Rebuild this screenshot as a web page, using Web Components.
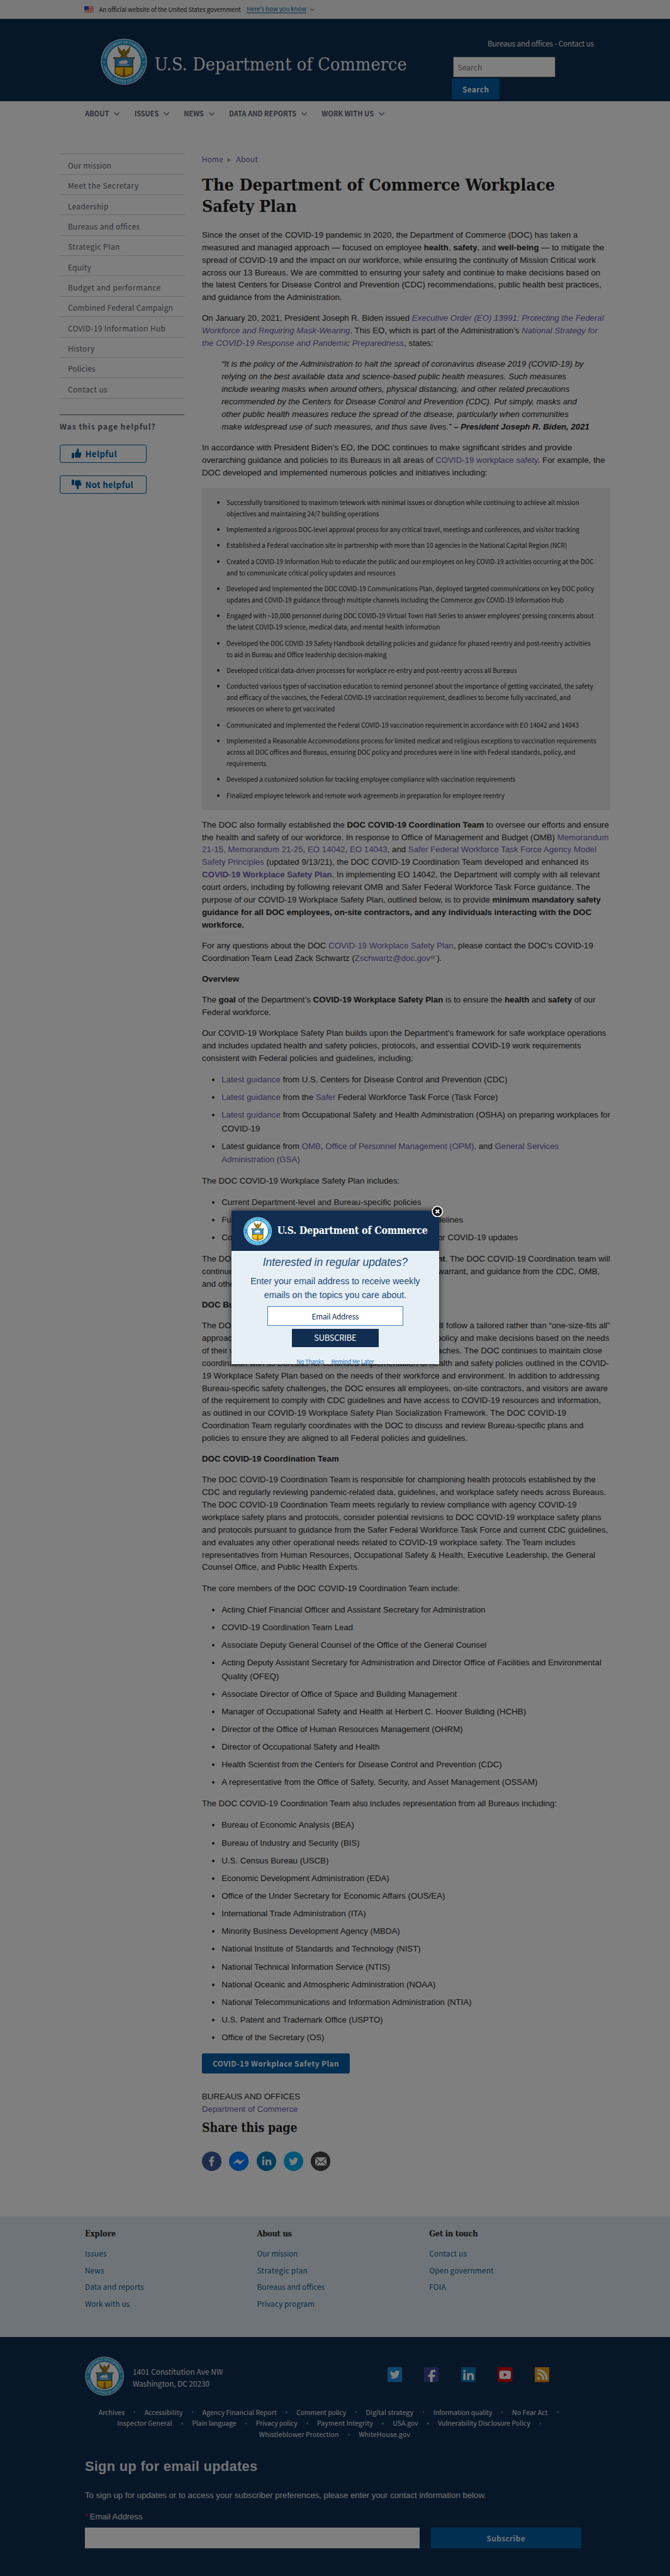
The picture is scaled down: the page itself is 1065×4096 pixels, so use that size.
<!DOCTYPE html>
<html lang="en">
<head>
<meta charset="utf-8">
<title>The Department of Commerce Workplace Safety Plan</title>
<style>
html{background:#09172a}
body{margin:0;overflow:hidden;background:#09172a;font:17px/25.5px "Liberation Sans",Arial,sans-serif;color:#212121;
--sans:"Noto Sans CJK SC","Noto Sans",sans-serif;--serif:"DejaVu Serif Condensed","DejaVu Serif",serif;--blue:#005ea2;--navy:#112e51;--visited:#6c59ab}
</style>
</head>
<body>
<commerce-page></commerce-page>
<script>
const K = 1366 / 1350;
const define = (name, html, after) => customElements.define(name, class extends HTMLElement {
  connectedCallback() {
    if (this.shadowRoot) return;
    this.attachShadow({mode: 'open'}).innerHTML = html;
    if (after) after(this, this.shadowRoot);
  }
});
const ctx = document.createElement('canvas').getContext('2d');
const measure = (el, text) => {
  const c = getComputedStyle(el);
  ctx.font = `${c.fontStyle} ${c.fontWeight} 100px ${c.fontFamily}`;
  return ctx.measureText(text).width / 100 * parseFloat(c.fontSize);
};

/* A label tracked so that it takes the width given in "w". */
define('fit-text', `<style>:host{display:inline-block;white-space:nowrap}</style><slot></slot>`, el => {
  const w = parseFloat(el.getAttribute('w')) * K, t = el.textContent;
  el.style.letterSpacing = ((w - measure(el, t)) / t.length).toFixed(3) + 'px';
});

define('doc-seal', `<style>:host{display:block;flex:none}svg{display:block;width:100%;height:100%}text{font:bold 7.4px "Liberation Sans",sans-serif;fill:#d9f1fb}</style>
<svg viewBox="-47 -47 94 94"><defs><path id="a" d="M-36.8 0A36.8 36.8 0 0 1 36.8 0"/><path id="b" d="M-42.2 0A42.2 42.2 0 0 0 42.2 0"/></defs>
<circle r="46.5" fill="#d4eaf6"/><circle r="44.8" fill="#259bd3"/><circle r="35.4" fill="#127cb2"/><circle r="34" fill="#fff"/>
<text text-anchor="middle" textLength="102"><textPath href="#a" startOffset="50%" textLength="102">DEPARTMENT OF COMMERCE</textPath></text>
<text text-anchor="middle" textLength="114"><textPath href="#b" startOffset="50%" textLength="114">UNITED STATES OF AMERICA</textPath></text>
<circle cx="-40" cy="1" r="1.2" fill="#fff"/><circle cx="40" cy="1" r="1.2" fill="#fff"/>
<path d="M-12-30C-12-22-9-15-4-13L-7-10H7L4-13C9-15 12-22 12-30C9-26 6-22 3-20L1-25-2-24-3-20C-6-22-9-26-12-30Z" fill="#a98a1f" stroke="#4b3a12" stroke-width=".9"/>
<path d="M-3-19L-1-11M3-19L1-11M-9-24L-4-15M9-24L4-15" stroke="#5a4514" stroke-width=".8"/>
<path d="M-21-8H21L18-4V24Q12 29 0 31.5Q-12 29-18 24V-4Z" fill="#ffc20e"/>
<path d="M-20-7H20L17.5-4V10H-17.5V-4Z" fill="#2b93cf"/>
<path d="M-9-1L-3-4-1-2 4-5 7-1H10L6 5H-8L-12 1Z" fill="#eef6fb" stroke="#23455c" stroke-width=".8"/><path d="M-12 6H12M-9 8H10" stroke="#d6ecf7" stroke-width="1"/>
<path d="M-17.5 10.5H17.5" stroke="#222" stroke-width="1.4"/>
<path d="M-1.5 13H1.5L2.5 25 4 29H-4L-2.5 25Z" fill="#8d6a12"/><path d="M-17 23Q-8 26-3 28M17 23Q8 26 3 28" stroke="#9d7c14" fill="none"/>
<path d="M-21-8H21L17.8-4V24Q12 29 0 31Q-12 29-17.8 24V-4Z" fill="none" stroke="#1c1c1c" stroke-width="1.3"/></svg>`);

define('down-chevron', `<style>:host{display:inline-block;width:12px;height:8px;flex:none}svg{display:block;width:100%;height:100%}</style><svg viewBox="0 0 12 8"><path d="M1 1L6 6.6 11 1" fill="none" stroke="currentColor" stroke-width="1.6"/></svg>`);

define('gov-banner', `<style>:host{display:flex;align-items:center;height:38.5px;background:#f1f1f1;padding-left:172px;font:12.3px/1 var(--sans);color:#212121}
svg{width:19.5px;height:13px;margin-right:10.5px}a{color:var(--blue);margin:0 8px 0 12px;border-bottom:1px solid;line-height:14px}down-chevron{width:8.5px;height:6px}.t{line-height:14px}</style>
<svg viewBox="0 0 20 13"><path fill="#fff" d="M0 0h20v13H0z"/><path stroke="#e0402c" d="M0 .5h20M0 2.5h20M0 4.5h20M0 6.5h20M0 8.5h20M0 10.5h20M0 12.5h20"/><path fill="#1e33b1" d="M0 0h9v7H0z"/><path stroke="#7686dd" stroke-dasharray="1 1" d="M1 1.5h7M1 3.5h7M1 5.5h7"/></svg>
<span class="t"><fit-text w="286">An official website of the United States government</fit-text></span><a><fit-text w="120">Here's how you know</fit-text></a><down-chevron></down-chevron>`);

define('site-header', `<style>:host{display:flex;height:168px;background:var(--navy);color:#fff;padding-left:205px;box-sizing:border-box}
doc-seal{width:95px;height:95px;margin-top:40px}
h2{margin:76px 0 0 15px;font:36.5px/1 var(--serif);height:44px;width:606px;color:#eef1f5}
.r{width:290px;font-family:var(--sans);display:flex;flex-direction:column}
.top{height:24px;margin-top:39px;text-align:right;font-size:15.2px;line-height:24px;color:#e8ebef}
.in{box-sizing:border-box;width:209.5px;height:42.5px;margin:14px 0 0 2px;background:#fff;border:1px solid #5b616b;padding-left:9px;font-size:15.2px;line-height:42px;color:#757575}
.b{width:98px;height:42.5px;margin-top:2px;background:var(--blue);border-radius:3px;text-align:center;font-weight:700;font-size:15.2px;line-height:42.5px}</style>
<doc-seal></doc-seal><h2><fit-text w="509">U.S. Department of Commerce</fit-text></h2>
<div class="r"><div class="top"><fit-text w="214">Bureaus and offices - Contact us</fit-text></div><div class="in"><fit-text w="49">Search</fit-text></div><div class="b"><fit-text w="54">Search</fit-text></div></div>`);

define('site-nav', `<style>:host{display:flex;height:107px;padding-left:173px;font:700 14.1px/50px var(--sans);color:#5b616b;box-sizing:border-box}
div{display:flex;align-items:center;height:50px;margin-right:29.5px}down-chevron{margin:2px 0 0 10px}</style>
<div><fit-text w="49">ABOUT</fit-text><down-chevron></down-chevron></div><div><fit-text w="49">ISSUES</fit-text><down-chevron></down-chevron></div><div><fit-text w="40">NEWS</fit-text><down-chevron></down-chevron></div><div><fit-text w="136">DATA AND REPORTS</fit-text><down-chevron></down-chevron></div><div><fit-text w="105">WORK WITH US</fit-text><down-chevron></down-chevron></div>`);

define('side-item', `<style>:host{display:block;height:41.5px;box-sizing:border-box;border-top:1.3px solid #d6d7d9;padding:2px 0 0 17px;font:15.2px/41px var(--sans);color:#5b616b}</style><slot></slot>`);
define('help-button', `<style>:host{display:flex;align-items:center;box-sizing:border-box;width:178px;height:37px;border:2px solid var(--blue);border-radius:4px;padding-left:24px;color:var(--blue);font:700 17px/33px var(--sans);margin-bottom:26px}
svg{width:20px;height:21px;margin-right:7px}:host([down]) svg{transform:rotate(180deg) scaleX(-1)}</style>
<svg viewBox="0 0 20 21" fill="currentColor"><path d="M0 9h5v11H0zM6.5 9.5C9 8 11 5 11 1c0-1.300 4-1 3.500 2.500L13.500 8H19c1.500 1 .8 2 0 3 .8 1 .5 2-.5 3 .5 1 0 2-.8 2.600.3 1.400-.5 2.400-1.700 2.400h-5c-2 0-3-1-4.500-1z"/></svg><slot></slot>`);
define('side-nav', `<style>:host{display:block;width:255px;margin-left:121.500px;flex:none}.rule{border-top:1.300px solid #d6d7d9;height:33px}.q{width:254px;border-top:1.500px solid #5b616b;font:700 15.600px/24px var(--sans);padding-top:11px;margin-bottom:25px;color:#5b616b}</style>
<side-item><fit-text w="88">Our mission</fit-text></side-item><side-item><fit-text w="143">Meet the Secretary</fit-text></side-item><side-item><fit-text w="82">Leadership</fit-text></side-item><side-item><fit-text w="145">Bureaus and offices</fit-text></side-item><side-item><fit-text w="105">Strategic Plan</fit-text></side-item><side-item><fit-text w="47">Equity</fit-text></side-item><side-item><fit-text w="187">Budget and performance</fit-text></side-item><side-item><fit-text w="212">Combined Federal Campaign</fit-text></side-item><side-item><fit-text w="197">COVID-19 Information Hub</fit-text></side-item><side-item><fit-text w="54">History</fit-text></side-item><side-item><fit-text w="56">Policies</fit-text></side-item><side-item><fit-text w="80">Contact us</fit-text></side-item>
<div class="rule"></div><div class="q"><fit-text w="194">Was this page helpful?</fit-text></div>
<help-button><fit-text w="64">Helpful</fit-text></help-button><help-button down><fit-text w="97">Not helpful</fit-text></help-button>`);

/* Shaded list of initiatives; one row per rendered line, text size taken from the width of the first. */
define('initiative-list', `<style>:host{display:block;background:#ececec;margin:18.500px 0 18px;padding:18px 0;width:832px;font:13px/23.250px var(--sans);color:#212121}
ul{margin:0;padding:0 0 0 50px;list-style:disc}li{margin-bottom:9.080px;white-space:nowrap}li:last-child{margin:0}</style>
<ul><li>Successfully transitioned to maximum telework with minimal issues or disruption while continuing to achieve all mission<br>objectives and maintaining 24/7 building operations</li>
<li>Implemented a rigorous DOC-level approval process for any critical travel, meetings and conferences, and visitor tracking</li>
<li>Established a Federal vaccination site in partnership with more than 10 agencies in the National Capital Region (NCR)</li>
<li>Created a COVID-19 Information Hub to educate the public and our employees on key COVID-19 activities occurring at the DOC<br>and to communicate critical policy updates and resources</li>
<li>Developed and implemented the DOC COVID-19 Communications Plan, deployed targeted communications on key DOC policy<br>updates and COVID-19 guidance through multiple channels including the Commerce.gov COVID-19 Information Hub</li>
<li>Engaged with ~10,000 personnel during DOC COVID-19 Virtual Town Hall Series to answer employees<span style="font-family:'Noto Sans'">’</span> pressing concerns about<br>the latest COVID-19 science, medical data, and mental health information</li>
<li>Developed the DOC COVID-19 Safety Handbook detailing policies and guidance for phased reentry and post-reentry activities<br>to aid in Bureau and Office leadership decision-making</li>
<li>Developed critical data-driven processes for workplace re-entry and post-reentry across all Bureaus</li>
<li>Conducted various types of vaccination education to remind personnel about the importance of getting vaccinated, the safety<br>and efficacy of the vaccines, the Federal COVID-19 vaccination requirement, deadlines to become fully vaccinated, and<br>resources on where to get vaccinated</li>
<li>Communicated and implemented the Federal COVID-19 vaccination requirement in accordance with EO 14042 and 14043</li>
<li>Implemented a Reasonable Accommodations process for limited medical and religious exceptions to vaccination requirements<br>across all DOC offices and Bureaus, ensuring DOC policy and procedures were in line with Federal standards, policy, and<br>requirements</li>
<li>Developed a customized solution for tracking employee compliance with vaccination requirements</li>
<li>Finalized employee telework and remote work agreements in preparation for employee reentry</li></ul>`, (el, root) => {
  const t = root.querySelector('li').firstChild.textContent;
  el.style.fontSize = (parseFloat(getComputedStyle(el).fontSize) * 720.4 / measure(el, t)).toFixed(2) + 'px';
});

define('share-row', `<style>:host{display:flex;gap:15.600px;height:40px}svg{width:40px;height:40px}</style>
<svg viewBox="0 0 40 40"><circle cx="20" cy="20" r="20" fill="#3b5998"/><path fill="#fff" d="M17.500 30V21H14.500V17H17.500V14.500C17.500 11.500 19.300 10 22 10H24.700V13.700H22.800C21.700 13.700 21.500 14.300 21.500 15.200V17H24.700L24.300 21H21.500V30Z"/></svg>
<svg viewBox="0 0 40 40"><circle cx="20" cy="20" r="20" fill="#007fff"/><path fill="#fff" d="M7 26L17.500 15.500 23 20 33 15.500 22.500 26.500 17 21.800Z"/></svg>
<svg viewBox="0 0 40 40"><circle cx="20" cy="20" r="20" fill="#007bb5"/><path fill="#fff" d="M11.500 16.500H15.500V28H11.500ZM18 16.500H21.700V18C24 15.200 30 15.500 30 21V28H26V22C26 18.500 22 18.800 22 22V28H18Z"/><circle cx="13.500" cy="12.700" r="2.300" fill="#fff"/></svg>
<svg viewBox="0 0 40 40"><circle cx="20" cy="20" r="20" fill="#00aced"/><path transform="translate(10.500 10.500) scale(.8)" fill="#fff" d="M23.950 4.570a10 10 0 0 1-2.820.77 4.960 4.960 0 0 0 2.160-2.720 9.900 9.900 0 0 1-3.120 1.180 4.920 4.920 0 0 0-8.380 4.480A13.900 13.900 0 0 1 1.640 3.160a4.920 4.920 0 0 0 1.520 6.570 4.900 4.900 0 0 1-2.230-.61v.06a4.920 4.920 0 0 0 3.950 4.830 5 5 0 0 1-2.210.08 4.940 4.940 0 0 0 4.600 3.420A9.870 9.870 0 0 1 0 19.540a14 14 0 0 0 7.550 2.210c9.050 0 14-7.500 14-13.980l-.02-.64a9.900 9.900 0 0 0 2.420-2.560z"/></svg>
<svg viewBox="0 0 40 40"><circle cx="20" cy="20" r="20" fill="#444"/><rect x="9" y="12" width="23" height="16.500" rx="1.500" fill="#fff"/><path d="M9 13L20.500 23 32 13M9.500 28L17 20M31.500 28L24 20" fill="none" stroke="#333" stroke-width="1.500"/></svg>`);

define('plan-article', `<style>:host{display:block;width:834px;margin-left:35.300px}
p{margin:0 0 17px;white-space:nowrap}a{color:var(--visited)}blockquote{margin:0 0 0 40px;font-style:italic}
ul{margin:0 0 17px;padding-left:40px}li{line-height:27.600px;margin-bottom:8.500px;white-space:nowrap}li:last-child{margin-bottom:0}
.crumb{font:15.200px/24px var(--sans);display:flex}.crumb i{font-style:normal;margin:0 12px 0 7px}
h1{font:700 34.500px/44px var(--serif);margin:18px 0 23.400px;height:88px;white-space:nowrap}
.ln{display:flex;justify-content:space-between}
.btn{width:301.500px;height:41px;margin-top:19px;background:var(--blue);border-radius:3px;color:#fff;text-align:center;font:700 15.200px/41px var(--sans)}
.meta{margin-top:34px;margin-bottom:10px}h3{font:700 25px/34px var(--serif);margin:0 0 30px}
svg.m{width:8px;height:6px;margin:0 4px 4px 1px}</style>
<div class="crumb"><a><fit-text w="43">Home</fit-text></a><i>»</i><a><fit-text w="44">About</fit-text></a></div>
<h1><fit-text w="712">The Department of Commerce Workplace</fit-text><br><fit-text w="191">Safety Plan</fit-text></h1>
<p>Since the onset of the COVID-19 pandemic in 2020, the Department of Commerce (DOC) has taken a<br>measured and managed approach — focused on employee <b>health</b>, <b>safety</b>, and <b>well-being</b> — to mitigate the<br>spread of COVID-19 and the impact on our workforce, while ensuring the continuity of Mission Critical work<br>across our 13 Bureaus. We are committed to ensuring your safety and continue to make decisions based on<br>the latest Centers for Disease Control and Prevention (CDC) recommendations, public health best practices,<br>and guidance from the Administration.</p>
<p>On January 20, 2021, President Joseph R. Biden issued <a><em>Executive Order (EO) 13991: Protecting the Federal<br>Workforce and Requiring Mask-Wearing</em></a>. This EO, which is part of the Administration’s <a><em>National Strategy for<br>the COVID-19 Response and Pandemic Preparedness</em></a>, states:</p>
<blockquote><p>“It is the policy of the Administration to halt the spread of coronavirus disease 2019 (COVID-19) by<br>relying on the best available data and science-based public health measures. Such measures<br>include wearing masks when around others, physical distancing, and other related precautions<br>recommended by the Centers for Disease Control and Prevention (CDC). Put simply, masks and<br>other public health measures reduce the spread of the disease, particularly when communities<br>make widespread use of such measures, and thus save lives.” <b>– President Joseph R. Biden, 2021</b></p></blockquote>
<p>In accordance with President Biden’s EO, the DOC continues to make significant strides and provide<br>overarching guidance and policies to its Bureaus in all areas of <a>COVID-19 workplace safety</a>. For example, the<br>DOC developed and implemented numerous policies and initiatives including:</p>
<initiative-list></initiative-list>
<p>The DOC also formally established the <b>DOC COVID-19 Coordination Team</b> to oversee our efforts and ensure<br>the health and safety of our workforce. In response to Office of Management and Budget (OMB) <a>Memorandum<br>21-15, Memorandum 21-25</a>, <a>EO 14042</a>, <a>EO 14043</a>, and <a>Safer Federal Workforce Task Force Agency Model<br>Safety Principles</a> (updated 9/13/21), the DOC COVID-19 Coordination Team developed and enhanced its<br><a><b>COVID-19 Workplace Safety Plan</b></a>. In implementing EO 14042, the Department will comply with all relevant<br>court orders, including by following relevant OMB and Safer Federal Workforce Task Force guidance. The<br>purpose of our COVID-19 Workplace Safety Plan, outlined below, is to provide <b>minimum mandatory safety<br>guidance for all DOC employees, on-site contractors, and any individuals interacting with the DOC<br>workforce.</b></p>
<p>For any questions about the DOC <a>COVID-19 Workplace Safety Plan</a>, please contact the DOC’s COVID-19<br>Coordination Team Lead Zack Schwartz (<a>Zschwartz@doc.gov</a><svg class="m" viewBox="0 0 8 6"><path d="M.5.500h7v5h-7zM.5.500L4 3.500 7.500.500" fill="none" stroke="#5b616b" stroke-width=".9"/></svg>).</p>
<p><b>Overview</b></p>
<p>The <b>goal</b> of the Department’s <b>COVID-19 Workplace Safety Plan</b> is to ensure the <b>health</b> and <b>safety</b> of our<br>Federal workforce.</p>
<p>Our COVID-19 Workplace Safety Plan builds upon the Department’s framework for safe workplace operations<br>and includes updated health and safety policies, protocols, and essential COVID-19 work requirements<br>consistent with Federal policies and guidelines, including:</p>
<ul><li><a>Latest guidance</a> from U.S. Centers for Disease Control and Prevention (CDC)</li><li><a>Latest guidance</a> from the <a>Safer</a> Federal Workforce Task Force (Task Force)</li><li><a>Latest guidance</a> from Occupational Safety and Health Administration (OSHA) on preparing workplaces for<br>COVID-19</li><li>Latest guidance from <a>OMB</a>, <a>Office of Personnel Management (OPM),</a> and <a>General Services<br>Administration (GSA)</a></li></ul>
<p>The DOC COVID-19 Workplace Safety Plan includes:</p>
<ul><li>Current Department-level and Bureau-specific policies</li><li><span class="ln" style="width:492.300px"><span>Future Department-level and</span><span>Bureau-specific guidelines</span></span></li><li><span class="ln" style="width:604.300px"><span>Communications and employee</span><span>resources for COVID-19 updates</span></span></li></ul>
<p><span class="ln" style="width:832px"><span>The DOC COVID-19 Safety Plan is a</span><span><b>living document</b>. The DOC COVID-19 Coordination team will</span></span><span class="ln" style="width:811px"><span>continue to update the Plan as needed,</span><span>as conditions warrant, and guidance from the CDC, OMB,</span></span>and other Federal agencies.</p>
<p><b>DOC Bureaus</b></p>
<p><span class="ln" style="width:832px"><span>The DOC COVID-19 Workplace Safety Plan</span><span>will follow a tailored rather than “one-size-fits all”</span></span><span class="ln" style="width:830.500px"><span>approach. Bureaus implement safety</span><span>policy and make decisions based on the needs</span></span><span class="ln" style="width:816px"><span>of their workforce and mission</span><span>approaches. The DOC continues to maintain close</span></span>coordination with its Bureaus for continued implementation of health and safety policies outlined in the COVID-<br>19 Workplace Safety Plan based on the needs of their workforce and environment. In addition to addressing<br>Bureau-specific safety challenges, the DOC ensures all employees, on-site contractors, and visitors are aware<br>of the requirement to comply with CDC guidelines and have access to COVID-19 resources and information,<br>as outlined in our COVID-19 Workplace Safety Plan Socialization Framework. The DOC COVID-19<br>Coordination Team regularly coordinates with the DOC to discuss and review Bureau-specific plans and<br>policies to ensure they are aligned to all Federal policies and guidelines.</p>
<p><b>DOC COVID-19 Coordination Team</b></p>
<p>The DOC COVID-19 Coordination Team is responsible for championing health protocols established by the<br>CDC and regularly reviewing pandemic-related data, guidelines, and workplace safety needs across Bureaus.<br>The DOC COVID-19 Coordination Team meets regularly to review compliance with agency COVID-19<br>workplace safety plans and protocols, consider potential revisions to DOC COVID-19 workplace safety plans<br>and protocols pursuant to guidance from the Safer Federal Workforce Task Force and current CDC guidelines,<br>and evaluates any other operational needs related to COVID-19 workplace safety. The Team includes<br>representatives from Human Resources, Occupational Safety &amp; Health, Executive Leadership, the General<br>Counsel Office, and Public Health Experts.</p>
<p>The core members of the DOC COVID-19 Coordination Team include:</p>
<ul><li>Acting Chief Financial Officer and Assistant Secretary for Administration</li><li>COVID-19 Coordination Team Lead</li><li>Associate Deputy General Counsel of the Office of the General Counsel</li><li>Acting Deputy Assistant Secretary for Administration and Director Office of Facilities and Environmental<br>Quality (OFEQ)</li><li>Associate Director of Office of Space and Building Management</li><li>Manager of Occupational Safety and Health at Herbert C. Hoover Building (HCHB)</li><li>Director of the Office of Human Resources Management (OHRM)</li><li>Director of Occupational Safety and Health</li><li>Health Scientist from the Centers for Disease Control and Prevention (CDC)</li><li>A representative from the Office of Safety, Security, and Asset Management (OSSAM)</li></ul>
<p>The DOC COVID-19 Coordination Team also includes representation from all Bureaus including:</p>
<ul><li>Bureau of Economic Analysis (BEA)</li><li>Bureau of Industry and Security (BIS)</li><li>U.S. Census Bureau (USCB)</li><li>Economic Development Administration (EDA)</li><li>Office of the Under Secretary for Economic Affairs (OUS/EA)</li><li>International Trade Administration (ITA)</li><li>Minority Business Development Agency (MBDA)</li><li>National Institute of Standards and Technology (NIST)</li><li>National Technical Information Service (NTIS)</li><li>National Oceanic and Atmospheric Administration (NOAA)</li><li>National Telecommunications and Information Administration (NTIA)</li><li>U.S. Patent and Trademark Office (USPTO)</li><li>Office of the Secretary (OS)</li></ul>
<div class="btn"><fit-text w="255">COVID-19 Workplace Safety Plan</fit-text></div>
<p class="meta">BUREAUS AND OFFICES<br><a>Department of Commerce</a></p>
<h3><fit-text w="192">Share this page</fit-text></h3><share-row></share-row>`);

define('footer-column', `<style>:host{display:block;width:351px;font:15.200px/34.300px var(--sans);color:#0f5a90}h4{font:700 16.500px/26px var(--serif);color:#212121;margin:0 0 10px}::slotted(fit-text){display:table!important}</style><h4><slot name="head"></slot></h4><slot></slot>`);
define('footer-links', `<style>:host{display:flex;height:246.600px;background:#dfe9f0;padding:23px 0 0 173px;box-sizing:border-box}</style>
<footer-column><fit-text slot="head" w="62.500">Explore</fit-text><fit-text w="44">Issues</fit-text><fit-text w="39">News</fit-text><fit-text w="119">Data and reports</fit-text><fit-text w="90.500">Work with us</fit-text></footer-column>
<footer-column><fit-text slot="head" w="70">About us</fit-text><fit-text w="82">Our mission</fit-text><fit-text w="102">Strategic plan</fit-text><fit-text w="136">Bureaus and offices</fit-text><fit-text w="116">Privacy program</fit-text></footer-column>
<footer-column><fit-text slot="head" w="98">Get in touch</fit-text><fit-text w="76">Contact us</fit-text><fit-text w="130">Open government</fit-text><fit-text w="34">FOIA</fit-text></footer-column>`);

const linkRow = (pad, items, last) => `<div class="row" style="padding-left:${(pad * K).toFixed(1)}px">` +
  items.map(([w, t], i) => `<fit-text w="${w}">${t}</fit-text>` + (i < items.length - 1 || last ? '<i></i>' : '')).join('') + '</div>';
define('site-footer', `<style>:host{display:block;background:var(--navy);color:#fff;height:500px;font-family:var(--sans);color:#e4e8ee}
.id{display:flex;padding:39.500px 0 0 173.500px;height:80px}doc-seal{width:80px;height:80px}
.ad{font-size:15.200px;line-height:25.200px;margin:17.500px 0 0 17px;width:519.500px}
.soc{display:flex;gap:45px;margin-top:22px}.soc svg{width:30px;height:30px}
.links{margin-top:22px;font-size:13.500px;line-height:23px}.row{display:flex;align-items:center;height:23px}i{width:3px;height:3px;border-radius:50%;background:#6c8a93;margin:0 18.700px}
h2{font:700 28px/36px "Liberation Sans",sans-serif;margin:36px 0 0 173px}
.p{font:17px/26px "Liberation Sans",sans-serif;margin:28px 0 0 173px}.l{font:17px/26px "Liberation Sans",sans-serif;margin:17px 0 0 173px}.l b{color:#e31c3d;font-weight:400}
.form{display:flex;gap:22.500px;margin:9.500px 0 0 173px}.form div{height:42px;width:682.500px;background:#fff}.form .s{width:307px;background:var(--blue);text-align:center;font:700 15.200px/44px var(--sans)}</style>
<div class="id"><doc-seal></doc-seal><div class="ad"><fit-text w="182">1401 Constitution Ave NW</fit-text><br><fit-text w="155">Washington, DC 20230</fit-text></div>
<div class="soc">
<svg viewBox="0 0 30 30"><rect width="30" height="30" rx="2" fill="#1d8ee0"/><path transform="translate(5 5) scale(.84)" fill="#fff" d="M23.950 4.570a10 10 0 0 1-2.820.77 4.960 4.960 0 0 0 2.160-2.720 9.900 9.900 0 0 1-3.120 1.180 4.920 4.920 0 0 0-8.380 4.480A13.900 13.900 0 0 1 1.640 3.160a4.920 4.920 0 0 0 1.520 6.570 4.900 4.900 0 0 1-2.230-.61v.06a4.920 4.920 0 0 0 3.950 4.830 5 5 0 0 1-2.210.08 4.940 4.940 0 0 0 4.600 3.420A9.870 9.870 0 0 1 0 19.540a14 14 0 0 0 7.550 2.210c9.050 0 14-7.500 14-13.980l-.02-.64a9.900 9.900 0 0 0 2.420-2.560z"/></svg>
<svg viewBox="0 0 30 30"><rect width="30" height="30" rx="2" fill="#3a4694"/><path fill="#fff" d="M12.500 30V20H8.500V15.500H12.500V12C12.500 7.500 15 5.500 18.500 5.500H23V10H20C18 10 17.500 10.800 17.500 12.500V15.500H22.800L22.200 20H17.500V30Z"/></svg>
<svg viewBox="0 0 30 30"><rect width="30" height="30" rx="2" fill="#0077b5"/><path fill="#fff" d="M4.500 12H9V26H4.500ZM12 12H16V14C18.500 10.500 26 11 26 18V26H21.500V19C21.500 14.500 16.500 15 16.500 19V26H12Z"/><circle cx="6.700" cy="7.700" r="2.500" fill="#fff"/></svg>
<svg viewBox="0 0 30 30"><rect width="30" height="30" rx="2" fill="#d8000f"/><rect x="3.500" y="7" width="23.500" height="17" rx="4.500" fill="#fff"/><path d="M12.500 11.500V19.500L19.500 15.500Z" fill="#d8000f"/></svg>
<svg viewBox="0 0 30 30"><rect width="30" height="30" rx="2" fill="#e69a11"/><circle cx="7.500" cy="22.500" r="3" fill="#fff"/><path d="M5 12.500Q17.500 13 17.800 25.500M5 6Q24 7 24.300 25.500" stroke="#fff" stroke-width="4" fill="none"/></svg></div></div>
<div class="links">${linkRow(198.700,[[52.500,'Archives'],[77,'Accessibility'],[149.500,'Agency Financial Report'],[100,'Comment policy'],[96,'Digital strategy'],[119,'Information quality'],[72,'No Fear Act']],1)}${linkRow(236,[[111,'Inspector General'],[89,'Plain language'],[83.500,'Privacy policy'],[112.500,'Payment Integrity'],[51.500,'USA.gov'],[186,'Vulnerability Disclosure Policy']],1)}${linkRow(522,[[161,'Whistleblower Protection'],[104,'WhiteHouse.gov']],0)}</div>
<h2><fit-text w="348">Sign up for email updates</fit-text></h2>
<div class="p"><fit-text w="809">To sign up for updates or to access your subscriber preferences, please enter your contact information below.</fit-text></div>
<div class="l"><b><fit-text w="10">*</fit-text></b><fit-text w="107">Email Address</fit-text></div>
<div class="form"><div></div><div class="s"><fit-text w="78">Subscribe</fit-text></div></div>`);

define('subscribe-dialog', `<style>:host{position:absolute;left:471.500px;top:2469.500px;width:424px;height:312.500px;box-shadow:0 0 12px rgba(0,0,0,.75);color:#1b4b7a;text-align:center}
.clip{height:100%;overflow:hidden;background:#e7eff6}.h{height:82px;background:#112e51;display:flex;align-items:center;padding-left:25px;color:#fff;font:700 20.500px/1 var(--serif)}doc-seal{width:58px;height:58px;margin:1px 11px 0 0}
.i{font:italic 22.500px/30px "Liberation Sans",sans-serif;margin-top:8px}.t{font:18.300px/27.500px "Liberation Sans",sans-serif;margin-top:11px}
.e{box-sizing:border-box;width:277px;height:39px;margin:9px auto 0;border:1.300px solid #3f7ab5;background:#fff;font:15.200px/38px var(--sans);color:#112e51}
.s{width:177px;height:37px;margin:7px auto 0;background:#112e51;color:#fff;font:16.500px/37px var(--sans)}
.l{display:flex;justify-content:center;gap:15px;margin-top:21px;font:12px/20px var(--sans);color:#2672b8}
.x{position:absolute;right:-9px;top:-11px;width:24px;height:24px}</style>
<div class="clip"><div class="h"><doc-seal></doc-seal><fit-text w="303">U.S. Department of Commerce</fit-text></div>
<div class="i"><fit-text w="292">Interested in regular updates?</fit-text></div><div class="t"><fit-text w="342">Enter your email address to receive weekly</fit-text><br><fit-text w="287">emails on the topics you care about.</fit-text></div>
<div class="e"><fit-text w="95">Email Address</fit-text></div><div class="s"><fit-text w="85">SUBSCRIBE</fit-text></div><div class="l"><fit-text w="55">No Thanks</fit-text><fit-text w="86">Remind Me Later</fit-text></div></div>
<svg class="x" viewBox="0 0 24 24"><circle cx="12" cy="12" r="10.500" fill="#111" stroke="#fff" stroke-width="2.200"/><path d="M8.500 8.500L15.500 15.500M15.500 8.500L8.500 15.500" stroke="#fff" stroke-width="2.800"/></svg>`);

define('commerce-page', `<style>:host{display:block;position:relative;width:1366px;height:5254px;zoom:.77965;overflow:hidden;background:#fff}
main{display:flex;height:4206.500px}.shade{position:absolute;inset:0;background:rgba(0,0,0,.5)}</style>
<gov-banner></gov-banner><site-header></site-header><site-nav></site-nav>
<main><side-nav></side-nav><plan-article></plan-article></main>
<footer-links></footer-links><site-footer></site-footer><div class="shade"></div><subscribe-dialog></subscribe-dialog>`);
</script>
</body>
</html>
